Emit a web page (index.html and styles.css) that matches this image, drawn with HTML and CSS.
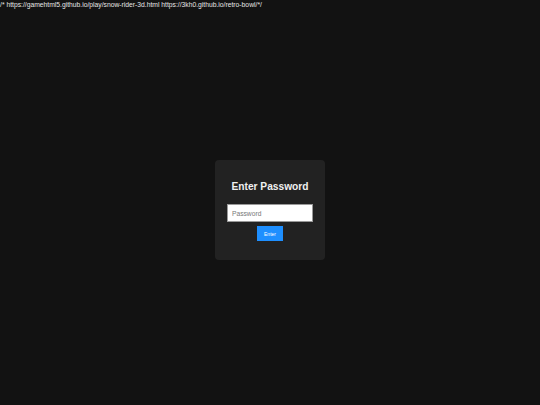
FILE: index.html
```html
<!DOCTYPE html>
<html>
<head>
<meta charset="utf-8">
<link rel="stylesheet" href="styles.css">
</head>
<body>
<div class="note">/* https://gamehtml5.github.io/play/snow-rider-3d.html https://3kh0.github.io/retro-bowl/*/</div>
<main class="stage">
  <div class="card">
    <h2 class="title">Enter Password</h2>
    <input class="field" type="password" placeholder="Password">
    <button class="btn">Enter</button>
  </div>
</main>
</body>
</html>
```
FILE: styles.css
```css
html, body {
  margin: 0;
  padding: 0;
}
body {
  background: #121212;
  color: #e8e8e8;
  font-family: "Liberation Sans", Arial, sans-serif;
  height: 405px;
  display: flex;
  flex-direction: column;
  overflow: hidden;
}
.note {
  font-size: 6.75px;
  line-height: 9px;
  height: 15px;
  white-space: nowrap;
  color: #e6e6e6;
}
.stage {
  flex: 1;
  display: flex;
  align-items: center;
  justify-content: center;
}
.card {
  width: 110px;
  box-sizing: border-box;
  height: 100px;
  padding: 21px 0 19px;
  background: #222222;
  border-radius: 4px;
  display: flex;
  flex-direction: column;
  align-items: center;
}
.title {
  margin: 0 0 11px;
  font-size: 10.2px;
  line-height: 12px;
  font-weight: bold;
  color: #f0f0f0;
}
.field {
  width: 86px;
  height: 18px;
  box-sizing: border-box;
  margin: 0;
  padding: 0 4px;
  border: 1px solid #999;
  background: #fff;
  font-family: "Liberation Sans", Arial, sans-serif;
  font-size: 6.7px;
  outline: none;
}
.field::placeholder {
  color: #777;
}
.btn {
  margin-top: 4px;
  width: 26px;
  height: 15px;
  padding: 0;
  border: none;
  background: #1e8fff;
  color: #fff;
  font-family: "Liberation Sans", Arial, sans-serif;
  font-size: 5px;
  cursor: pointer;
}
```
